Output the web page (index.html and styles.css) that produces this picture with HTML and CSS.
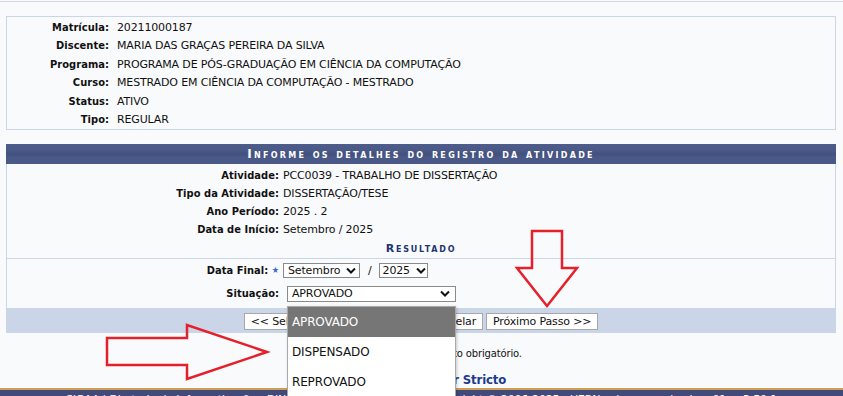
FILE: index.html
```html
<!DOCTYPE html>
<html>
<head>
    <meta http-equiv="Content-Type" content="text/html; charset=utf-8" />
    <title>Registro de Atividade</title>
    <link rel="stylesheet" href="styles.css">
</head>
<body>
<div class="topline"></div>

<div class="content">
    <!--dados do discente-->
    <div class="info">
        <span class="lbl">Matrícula:</span><span>20211000187</span>
        <span class="lbl">Discente:</span><span>MARIA DAS GRAÇAS PEREIRA DA SILVA</span>
        <span class="lbl">Programa:</span><span>PROGRAMA DE PÓS-GRADUAÇÃO EM CIÊNCIA DA COMPUTAÇÃO</span>
        <span class="lbl">Curso:</span><span>MESTRADO EM CIÊNCIA DA COMPUTAÇÃO - MESTRADO</span>
        <span class="lbl">Status:</span><span>ATIVO</span>
        <span class="lbl">Tipo:</span><span>REGULAR</span>
    </div>

    <!--formulario-->
    <div class="form">
        <div class="caption">Informe os detalhes do registro da atividade</div>
        <div class="form-body">
            <div class="fields">
                <span class="lbl">Atividade:</span><span>PCC0039 - TRABALHO DE DISSERTAÇÃO</span>
                <span class="lbl">Tipo da Atividade:</span><span>DISSERTAÇÃO/TESE</span>
                <span class="lbl">Ano Período:</span><span>2025 . 2</span>
                <span class="lbl">Data de Início:</span><span>Setembro / 2025</span>
            </div>
            <div class="subcaption">Resultado</div>
            <div class="result">
                <div class="row">
                    <span class="lbl lbl-req">Data Final: <span class="star">&#9733;</span></span>
                    <span class="val">
                        <span class="select sel-month">Setembro<svg class="chev" viewBox="0 0 10 6"><path d="M1 1l4 4 4-4" /></svg></span>
                        <span class="slash">/</span>
                        <span class="select sel-year">2025<svg class="chev" viewBox="0 0 10 6"><path d="M1 1l4 4 4-4" /></svg></span>
                    </span>
                </div>
                <div class="row row-sit">
                    <span class="lbl">Situação:</span>
                    <span class="val">
                        <span class="select sel-sit">APROVADO<svg class="chev" viewBox="0 0 10 6"><path d="M1 1l4 4 4-4" /></svg></span>
                    </span>
                </div>
            </div>
        </div>
        <div class="actions">
            <button class="btn btn-back">&lt;&lt; Selecionar Outro Discente</button>
            <button class="btn">Cancelar</button>
            <button class="btn">Próximo Passo &gt;&gt;</button>
        </div>
    </div>

    <p class="required"><span class="star">&#9733;</span> Campos de preenchimento obrigatório.</p>
    <p class="menu"><a href="#">Menu Coordenador Stricto</a></p>
</div>

<div class="footer">
    SIGAA | Diretoria de Informatização - DINF/UERN - (84) 3315-2200 | Copyright © 2006-2025 - UERN - sigaa.uern.br.sigaa01 - v3.50.1
</div>

<!--lista aberta do select-->
<ul class="dropdown">
    <li class="current">APROVADO</li>
    <li>DISPENSADO</li>
    <li>REPROVADO</li>
</ul>

<!--setas-->
<svg class="arrows" width="843" height="396" viewBox="0 0 843 396">
    <polygon points="532,231 562,231 562,268 577,268 547,306 517,268 532,268" />
    <polygon points="107,338 187,338 187,325 267,352 187,379 187,365 107,365" />
</svg>
</body>
</html>
```

FILE: styles.css
```css
body {
    margin:0;
    height:396px;
    overflow:hidden;
    position:relative;
    background:#f9fafc;
    color:#111;
    font-family:"DejaVu Sans", sans-serif;
    font-size:11px;
    letter-spacing:-0.15px;
}
.topline {
    height:1px;
    margin-top:1px;
    background:#cdd8ea;
}
.content {
    padding:0 7px 0 6px;
}
.lbl {
    font-family:"DejaVu Sans Condensed", "DejaVu Sans", sans-serif;
    font-weight:bold;
    letter-spacing:0.05px;
    text-align:right;
}

/* dados do discente */
.info {
    margin-top:14px;
    border:1px solid #c9d6ea;
    padding-top:1px;
    display:grid;
    grid-template-columns:102px 1fr;
    grid-auto-rows:18.5px;
    column-gap:8px;
    align-items:center;
}

/* formulario */
.form {
    margin-top:14px;
}
.caption {
    height:20px;
    line-height:20px;
    background:linear-gradient(#4e5c8c, #4a5888 35%, #44527f 45%, #44527f 55%, #4a5888 65%, #4b5989);
    color:#fff;
    text-align:center;
    font-weight:bold;
    font-size:12px;
    font-variant:small-caps;
    letter-spacing:2.3px;
}
.form-body {
    border:1px solid #c9d6ea;
    border-top:0;
    padding-bottom:2px;
}
.fields {
    padding-top:2px;
    display:grid;
    grid-template-columns:272px 1fr;
    grid-auto-rows:18px;
    column-gap:4px;
    align-items:center;
}
.subcaption {
    height:20px;
    line-height:22px;
    text-align:center;
    font-weight:bold;
    font-variant:small-caps;
    letter-spacing:1.8px;
    color:#22346e;
}
.result {
    border-top:1px solid #c9d6ea;
}
.result .row {
    display:grid;
    grid-template-columns:272px 1fr;
    column-gap:4px;
    align-items:center;
    height:22px;
}
.result .row-sit {
    height:25px;
}
.row-sit .val {
    padding-left:4px;
}
.star {
    color:#3a6bc4;
    font-size:9px;
    vertical-align:1px;
}
.val {
    display:flex;
    align-items:center;
}
.select {
    box-sizing:border-box;
    display:flex;
    align-items:center;
    justify-content:space-between;
    height:15px;
    padding:0 3px 0 4px;
    border:1px solid #8a8a8a;
    background:#fff;
    font-size:11px;
}
.sel-month {
    width:77px;
}
.sel-year {
    width:49px;
    padding-left:3px;
    padding-right:1px;
}
.sel-sit {
    width:169px;
    height:16px;
    padding-right:5px;
}
.chev {
    width:10px;
    height:7px;
    fill:none;
    stroke:#111;
    stroke-width:2;
}
.slash {
    margin:0 7px 0 8px;
}
.actions {
    height:24px;
    background:#cbd5e8;
    display:flex;
    justify-content:center;
    align-items:center;
    gap:3px;
}
.btn {
    height:17px;
    padding:0 6px;
    border:1px solid #a8a8a8;
    background:#fff;
    color:#111;
    font-family:"DejaVu Sans", sans-serif;
    font-size:11px;
    letter-spacing:-0.15px;
    line-height:15px;
}
.btn-back {
    width:175px;
    overflow:hidden;
    white-space:nowrap;
}
.required {
    margin:14px 0 0;
    text-align:center;
    font-size:10px;
    line-height:12px;
}
.menu {
    margin:13px 0 0;
    text-align:center;
    line-height:14px;
}
.menu a {
    color:#1d3a8c;
    font-family:"DejaVu Sans Condensed", "DejaVu Sans", sans-serif;
    font-weight:bold;
    font-size:13px;
    text-decoration:none;
}
.footer {
    margin-top:0;
    border-top:2px solid #d29c4e;
    background:#404b7c;
    color:#fff;
    height:30px;
    padding-top:3px;
    text-align:center;
    font-size:11px;
    white-space:nowrap;
    overflow:hidden;
}

/* lista aberta */
.dropdown {
    position:absolute;
    left:287px;
    top:306px;
    width:167px;
    height:100px;
    margin:0;
    padding:0;
    list-style-type:none;
    background:#fff;
    border:1px solid #a9a9a9;
    box-shadow:1px 1px 3px rgba(0,0,0,0.2);
    font-size:12px;
}
.dropdown li {
    height:30px;
    line-height:31px;
    padding-left:4px;
}
.dropdown li.current {
    background:#767676;
    color:#fff;
}
.arrows {
    position:absolute;
    left:0;
    top:0;
    pointer-events:none;
}
.arrows polygon {
    fill:none;
    stroke:#e5202a;
    stroke-width:2.5;
}
```
